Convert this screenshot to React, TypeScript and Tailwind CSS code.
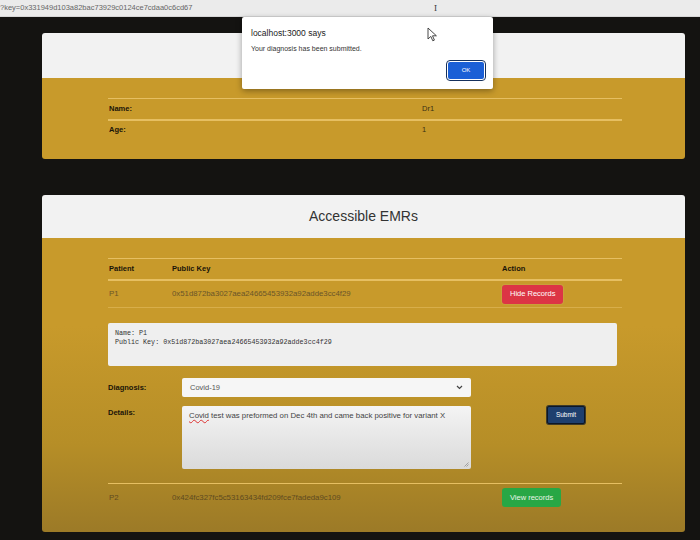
import React from "react";

const GOLD_LINE = "border-[#e6bf62]";

function Pointer() {
  return (
    <svg width="11" height="15" viewBox="0 0 11 15" className="absolute left-[427px] top-[27px]">
      <path d="M1 1 L1 12 L3.8 9.4 L5.8 13.8 L7.4 13.1 L5.5 8.8 L9.4 8.8 Z" fill="#fff" stroke="#333" strokeWidth="0.9" />
    </svg>
  );
}

function AlertBox() {
  return (
    <div className="absolute left-[242px] top-[17px] w-[251px] h-[72px] bg-white rounded-[2px] shadow-[0_2px_6px_rgba(0,0,0,0.35)] px-[9px] pt-[11px]">
      <div className="text-[8.5px] text-[#222] leading-[10px]">localhost:3000 says</div>
      <div className="text-[7px] text-[#333] leading-[8px] mt-[7px]">Your diagnosis has been submitted.</div>
      <div className="flex justify-end mt-[9px]">
        <button className="w-[36px] h-[17px] bg-[#1b5fd6] rounded-[2px] text-white text-[6px] outline outline-[1.5px] outline-[#15305c] outline-offset-[1px]">
          OK
        </button>
      </div>
    </div>
  );
}

export default function App() {
  return (
    <div
      className="relative w-[700px] h-[540px] overflow-hidden bg-[#141311]"
      style={{ fontFamily: '"Liberation Sans", Arial, sans-serif' }}
    >
      <div className="h-[17px] bg-[#ebebeb] border-b border-[#d6d6d6] flex items-center text-[7.5px] text-[#666] relative">
        ?key=0x331949d103a82bac73929c0124ce7cdaa0c6cd67
        <span className="absolute left-[434px] top-[2px] text-[9px] text-[#333] font-serif">I</span>
      </div>

      <div className="pl-[42px] pr-[15px] pt-[16px] flex flex-col gap-[36px]">
        {/* Profile card */}
        <div className="h-[126px] rounded-[3px] overflow-hidden flex flex-col">
          <div className="h-[45px] bg-[#f2f2f2]" />
          <div className="flex-1 bg-[#c89a2b] pl-[66px] pr-[63px] pt-[20px]">
            <div className={`border-t ${GOLD_LINE} grid grid-cols-[313px_1fr] h-[21px] items-center px-[1px] text-[7.5px]`}>
              <span className="font-bold text-[#1a1408]">Name:</span>
              <span className="text-[#3b2f14]">Dr1</span>
            </div>
            <div className={`border-t-2 ${GOLD_LINE} grid grid-cols-[313px_1fr] h-[20px] items-center px-[1px] text-[7.5px]`}>
              <span className="font-bold text-[#1a1408]">Age:</span>
              <span className="text-[#3b2f14]">1</span>
            </div>
          </div>
        </div>

        {/* Accessible EMRs */}
        <div className="h-[337px] rounded-[3px] overflow-hidden flex flex-col">
          <div className="h-[43px] bg-[#f2f2f2] flex items-center justify-center text-[14px] text-[#333]">
            Accessible EMRs
          </div>
          <div className="flex-1 bg-[linear-gradient(to_bottom,#c89a2b_0%,#c89a2b_30%,#b68e27_70%,#9c7a27_100%)] pl-[66px] pr-[63px] pt-[20px]">
            <div className={`border-t ${GOLD_LINE} grid grid-cols-[63px_330px_1fr] h-[21px] items-center px-[1px] text-[7.5px] font-bold text-[#1a1408]`}>
              <span>Patient</span>
              <span>Public Key</span>
              <span>Action</span>
            </div>
            <div className={`border-t-2 ${GOLD_LINE} grid grid-cols-[63px_330px_1fr] h-[28px] items-center px-[1px] text-[7.8px] text-[#6a5529]`}>
              <span>P1</span>
              <span>0x51d872ba3027aea24665453932a92adde3cc4f29</span>
              <span>
                <button className="h-[19px] px-[8px] bg-[#dc3545] rounded-[3px] text-white text-[7.5px] shadow-[0_0_0_1px_#c9a03a]">
                  Hide Records
                </button>
              </span>
            </div>
            <div className="border-t border-[#d8ae4a] pt-[15px]">
              <div className="mr-[5px] h-[43px] bg-[#efefef] rounded-[2px] px-[7px] pt-[6px] text-[6.7px] leading-[9px] text-[#333]" style={{ fontFamily: '"Liberation Mono", monospace' }}>
                <div>Name: P1</div>
                <div>Public Key: 0x51d872ba3027aea24665453932a92adde3cc4f29</div>
              </div>

              <div className="flex mt-[12px] items-start">
                <span className="w-[74px] pt-[4px] text-[7.5px] font-bold text-[#1a1408]">Diagnosis:</span>
                <div className="w-[289px] h-[19px] bg-[#f6f6f6] rounded-[2px] flex items-center justify-between px-[8px] text-[7.5px] text-[#555]">
                  <span>Covid-19</span>
                  <svg width="7" height="5" viewBox="0 0 7 5">
                    <path d="M1 1 L3.5 3.5 L6 1" fill="none" stroke="#444" strokeWidth="1.2" />
                  </svg>
                </div>
              </div>

              <div className="flex mt-[9px] items-start">
                <span className="w-[74px] pt-[1px] text-[7.5px] font-bold text-[#1a1408]">Details:</span>
                <div className="relative w-[289px] h-[63px] rounded-[2px] bg-[linear-gradient(to_bottom,#f4f4f4,#dadada)] px-[7px] pt-[4px] text-[7.8px] text-[#444]">
                  <span className="underline decoration-wavy decoration-[#d33] underline-offset-[1px]">Covid</span> test was preformed on Dec 4th and came back positive for variant X
                  <svg width="5" height="5" viewBox="0 0 5 5" className="absolute right-[2px] bottom-[2px]">
                    <path d="M0.5 4.5 L4.5 0.5 M2.5 4.5 L4.5 2.5" stroke="#888" strokeWidth="0.7" />
                  </svg>
                </div>
                <button className="ml-[76px] w-[38px] h-[18px] bg-[#1e3f6e] rounded-[2px] text-white text-[6.5px] border border-[#0d1726] shadow-[0_0_0_1px_#3d3a2a]">
                  Submit
                </button>
              </div>
            </div>

            <div className={`mt-[14px] border-t ${GOLD_LINE} grid grid-cols-[63px_330px_1fr] h-[28px] items-center px-[1px] text-[7.8px] text-[#5e4a20]`}>
              <span>P2</span>
              <span>0x424fc327fc5c53163434fd209fce7fadeda9c109</span>
              <span>
                <button className="h-[19px] px-[8px] bg-[#28a745] rounded-[3px] text-[#e8f5e8] text-[7.5px]">
                  View records
                </button>
              </span>
            </div>
          </div>
        </div>
      </div>

      <AlertBox />
      <Pointer />
    </div>
  );
}
